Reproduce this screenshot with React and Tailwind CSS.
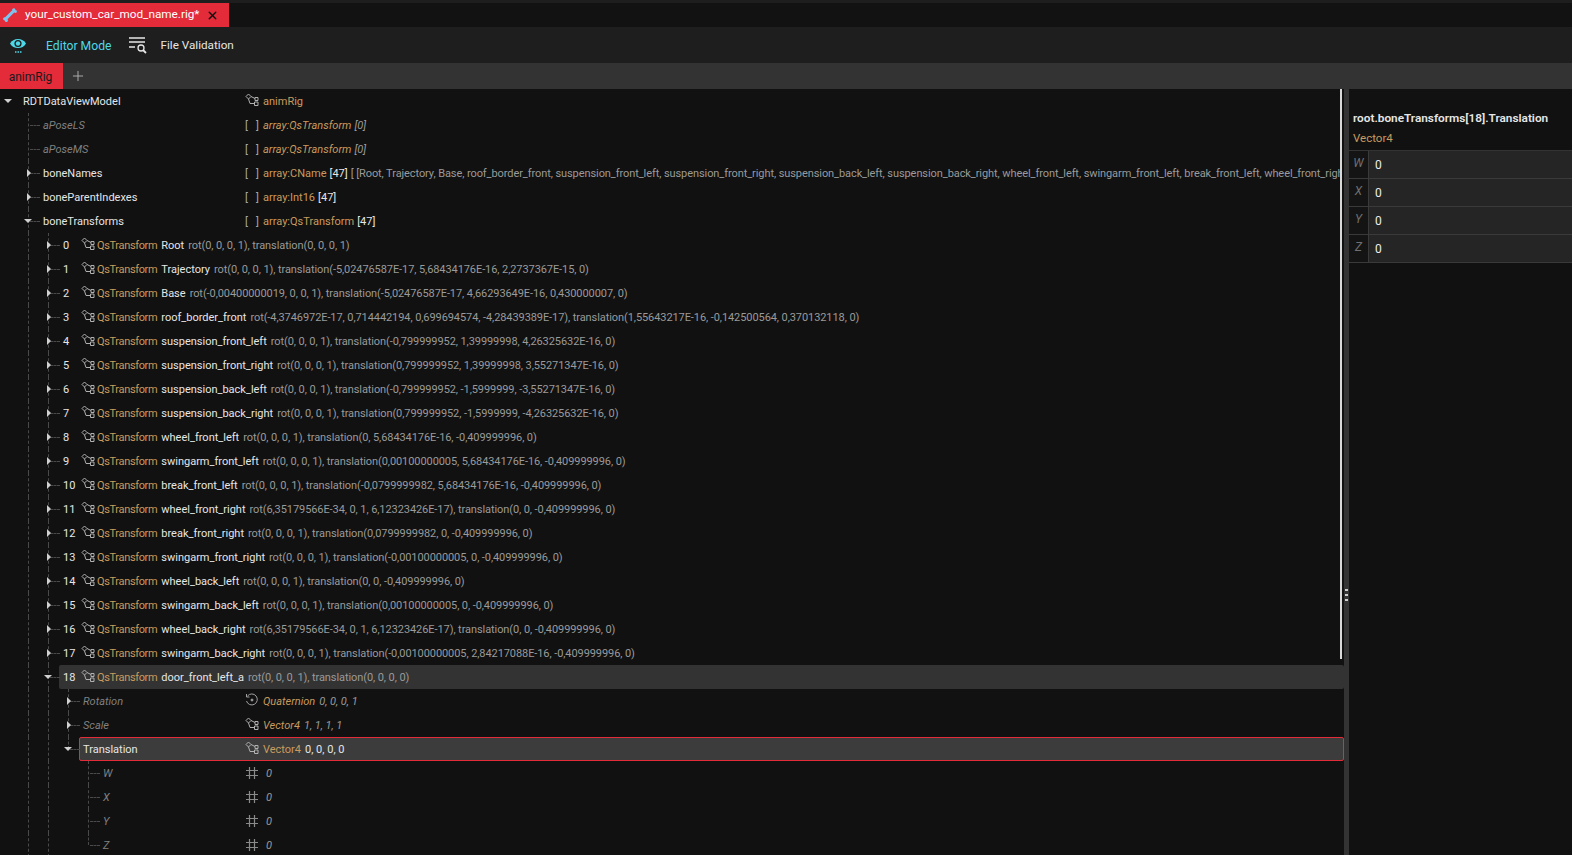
import { Plus, X } from "lucide-react";

const BONES = [
  ["Root", "rot(0, 0, 0, 1), translation(0, 0, 0, 1)"],
  ["Trajectory", "rot(0, 0, 0, 1), translation(-5,02476587E-17, 5,68434176E-16, 2,2737367E-15, 0)"],
  ["Base", "rot(-0,00400000019, 0, 0, 1), translation(-5,02476587E-17, 4,66293649E-16, 0,430000007, 0)"],
  ["roof_border_front", "rot(-4,3746972E-17, 0,714442194, 0,699694574, -4,28439389E-17), translation(1,55643217E-16, -0,142500564, 0,370132118, 0)"],
  ["suspension_front_left", "rot(0, 0, 0, 1), translation(-0,799999952, 1,39999998, 4,26325632E-16, 0)"],
  ["suspension_front_right", "rot(0, 0, 0, 1), translation(0,799999952, 1,39999998, 3,55271347E-16, 0)"],
  ["suspension_back_left", "rot(0, 0, 0, 1), translation(-0,799999952, -1,5999999, -3,55271347E-16, 0)"],
  ["suspension_back_right", "rot(0, 0, 0, 1), translation(0,799999952, -1,5999999, -4,26325632E-16, 0)"],
  ["wheel_front_left", "rot(0, 0, 0, 1), translation(0, 5,68434176E-16, -0,409999996, 0)"],
  ["swingarm_front_left", "rot(0, 0, 0, 1), translation(0,00100000005, 5,68434176E-16, -0,409999996, 0)"],
  ["break_front_left", "rot(0, 0, 0, 1), translation(-0,0799999982, 5,68434176E-16, -0,409999996, 0)"],
  ["wheel_front_right", "rot(6,35179566E-34, 0, 1, 6,12323426E-17), translation(0, 0, -0,409999996, 0)"],
  ["break_front_right", "rot(0, 0, 0, 1), translation(0,0799999982, 0, -0,409999996, 0)"],
  ["swingarm_front_right", "rot(0, 0, 0, 1), translation(-0,00100000005, 0, -0,409999996, 0)"],
  ["wheel_back_left", "rot(0, 0, 0, 1), translation(0, 0, -0,409999996, 0)"],
  ["swingarm_back_left", "rot(0, 0, 0, 1), translation(0,00100000005, 0, -0,409999996, 0)"],
  ["wheel_back_right", "rot(6,35179566E-34, 0, 1, 6,12323426E-17), translation(0, 0, -0,409999996, 0)"],
  ["swingarm_back_right", "rot(0, 0, 0, 1), translation(-0,00100000005, 2,84217088E-16, -0,409999996, 0)"],
];

const BONE_NAMES =
  "[ [Root, Trajectory, Base, roof_border_front, suspension_front_left, suspension_front_right, suspension_back_left, suspension_back_right, wheel_front_left, swingarm_front_left, break_front_left, wheel_front_right, break_front_right, swingarm_front_right]";

function NodeIcon() {
  return (
    <svg width="14" height="14" viewBox="0 0 14 14" fill="none" stroke="#b0b0b0" strokeWidth="1" className="relative shrink-0 -translate-y-px">
      <path d="M1 3.500 L3.500 1 L6 3.500 L3.500 6 Z" />
      <path d="M6 3.500 L10 5.500 M3.500 6 L5 10.500 L9.500 10.500" />
      <path d="M10 4.500 h3 v3 h-3 z M9.500 9 h3.500 v3.500 h-3.500 z" />
    </svg>
  );
}

function QuatIcon() {
  return (
    <svg width="14" height="14" viewBox="0 0 14 14" fill="none" stroke="#a0a0a0" strokeWidth="1" className="relative shrink-0 -translate-y-px">
      <path d="M2.500 3 A5.500 5.500 0 1 1 1.500 8" />
      <path d="M1.500 1 V4 H4.500" />
      <circle cx="7" cy="7" r="1" fill="#a0a0a0" />
    </svg>
  );
}

function HashIcon() {
  return (
    <svg width="14" height="14" viewBox="0 0 14 14" fill="none" stroke="#8a8a8a" strokeWidth="1.2" className="relative shrink-0">
      <path d="M4.500 1v12M9.500 1v12M1 4.500h12M1 9.500h12" />
    </svg>
  );
}

function Brackets() {
  return (
    <span className="flex w-[14px] shrink-0 justify-between text-[#a8a8a8]">
      <span>[</span>
      <span>]</span>
    </span>
  );
}

function Caret({ open }) {
  if (open) {
    return <span className="absolute left-[4px] top-[10px] h-0 w-0 border-x-[4px] border-t-[4px] border-x-transparent border-t-[#d0d0d0]" />;
  }
  return <span className="absolute left-[7px] top-[8px] h-0 w-0 border-y-[4px] border-l-[4px] border-y-transparent border-l-[#d0d0d0]" />;
}

// one indent cell per ancestor level, the guide runs through the cell at x=8
function Guide({ blank }) {
  return (
    <div className="relative h-6 w-5 shrink-0">
      {!blank && <span className="absolute left-[8px] top-0 h-6 border-l border-dashed border-[#4a4a4a]" />}
    </div>
  );
}

function Stub({ caret, last, root }) {
  return (
    <div className="relative h-6 w-5 shrink-0">
      {!root && <span className={`absolute left-[8px] top-0 border-l border-dashed border-[#4a4a4a] ${last ? "h-3" : "h-6"}`} />}
      {!root && <span className="absolute left-[10px] top-3 w-[10px] border-t border-dashed border-[#4a4a4a]" />}
      {caret && <Caret open={caret === "open"} />}
    </div>
  );
}

function Row({ indent, caret, last, root, label, dim, children, selected }) {
  return (
    <div className="relative flex h-6 items-center">
      {selected && <div className="absolute inset-y-0 left-[79px] right-0 rounded-[2px] border border-[#e32b3a] bg-[#3c3c3c]" />}
      <div className="relative flex h-6 w-[245px] shrink-0 items-center overflow-hidden">
        {indent}
        <Stub caret={caret} last={last} root={root} />
        <span className={`ml-[3px] translate-y-px whitespace-nowrap ${dim ? "italic text-[#808080]" : "text-[#e6e6e6]"}`}>{label}</span>
      </div>
      <div className="relative mr-1 flex min-w-0 flex-1 items-center gap-[3px] overflow-hidden whitespace-nowrap [&>span]:translate-y-px">{children}</div>
    </div>
  );
}

function BoneRow({ i, name, desc, open }) {
  return (
    <div className="relative flex h-6 items-center [&>span]:translate-y-px">
      {open && <div className="absolute inset-y-0 left-[59px] right-0 rounded-[2px] bg-[#333333]" />}
      <Guide blank />
      <Guide />
      <Stub caret={open ? "open" : "closed"} />
      <span className="relative ml-[3px] w-[18px] shrink-0 text-[#e6e6e6]">{i}</span>
      <NodeIcon />
      <span className="relative ml-[2px] mr-[4px] shrink-0 tracking-[-0.35px] text-[#c89b5f]">QsTransform</span>
      <span className="relative whitespace-nowrap text-[#e6e6e6]">{name}</span>
      <span className="relative ml-[4px] whitespace-nowrap tracking-[-0.08px] text-[#9a9a9a]">{desc}</span>
    </div>
  );
}

const L1 = <Guide blank />;
const L3 = (
  <>
    <Guide blank />
    <Guide />
    <Guide />
  </>
);
const L4 = (
  <>
    <Guide blank />
    <Guide />
    <Guide />
    <Guide blank />
  </>
);

function Tree() {
  return (
    <div className="relative w-[1344px] shrink-0 overflow-hidden">
      <Row root caret="open" label="RDTDataViewModel">
        <NodeIcon /><span className="ml-[1px] text-[#c89b5f]">animRig</span>
      </Row>
      <Row indent={L1} dim label="aPoseLS">
        <Brackets /><span className="ml-[1px] italic text-[#c89b5f]">array:QsTransform</span><span className="italic text-[#9a9a9a]">[0]</span>
      </Row>
      <Row indent={L1} dim label="aPoseMS">
        <Brackets /><span className="ml-[1px] italic text-[#c89b5f]">array:QsTransform</span><span className="italic text-[#9a9a9a]">[0]</span>
      </Row>
      <Row indent={L1} caret="closed" label="boneNames">
        <Brackets /><span className="ml-[1px] text-[#c89b5f]">array:CName</span><span className="text-[#e6e6e6]">[47]</span>
        <span className="tracking-[-0.08px] text-[#9a9a9a]">{BONE_NAMES}</span>
      </Row>
      <Row indent={L1} caret="closed" label="boneParentIndexes">
        <Brackets /><span className="ml-[1px] text-[#c89b5f]">array:Int16</span><span className="text-[#e6e6e6]">[47]</span>
      </Row>
      <Row indent={L1} caret="open" label="boneTransforms">
        <Brackets /><span className="ml-[1px] text-[#c89b5f]">array:QsTransform</span><span className="text-[#e6e6e6]">[47]</span>
      </Row>
      {BONES.map(([name, desc], i) => <BoneRow key={name} i={i} name={name} desc={desc} />)}
      <BoneRow i={18} name="door_front_left_a" desc="rot(0, 0, 0, 1), translation(0, 0, 0, 0)" open />
      <Row indent={L3} caret="closed" dim label="Rotation">
        <QuatIcon /><span className="ml-[1px] italic text-[#c89b5f]">Quaternion</span><span className="ml-[1px] italic text-[#9a9a9a]">0, 0, 0, 1</span>
      </Row>
      <Row indent={L3} caret="closed" dim label="Scale">
        <NodeIcon /><span className="ml-[1px] italic text-[#c89b5f]">Vector4</span><span className="ml-[1px] italic text-[#9a9a9a]">1, 1, 1, 1</span>
      </Row>
      <Row indent={L3} caret="open" last label="Translation" selected>
        <NodeIcon /><span className="ml-[1px] text-[#c89b5f]">Vector4</span><span className="ml-[1px] text-[#e6e6e6]">0, 0, 0, 0</span>
      </Row>
      {["W", "X", "Y", "Z"].map((axis) => (
        <Row key={axis} indent={L4} last={axis === "Z"} dim label={axis}>
          <HashIcon />
          <span className="ml-[4px] italic text-[#9a9a9a]">0</span>
        </Row>
      ))}
      <div className="absolute right-[2px] top-0 h-[570px] w-[2px] bg-[#d8d8d8]" />
    </div>
  );
}

function Inspector() {
  return (
    <div className="min-w-0 flex-1">
      <div className="flex h-[61px] flex-col justify-end gap-[4px] pb-[4px] pl-1 leading-4">
        <div className="text-[11.8px] font-semibold text-[#e6e6e6]">root.boneTransforms[18].Translation</div>
        <div className="text-[11.5px] text-[#c89b5f]">Vector4</div>
      </div>
      <div className="border-t border-[#333333]">
        {["W", "X", "Y", "Z"].map((axis) => (
          <div key={axis} className="flex h-7 border-b border-[#3a3a3a] bg-[#252525]">
            <div className="flex w-[20px] items-center justify-center border-r border-[#3a3a3a] bg-[#141414] pb-[3px] text-[12px] italic text-[#707070]">{axis}</div>
            <div className="flex items-center pl-[6px] text-[12px] text-[#eeeeee]">0</div>
          </div>
        ))}
      </div>
    </div>
  );
}

export default function App() {
  return (
    <div className="flex h-[855px] w-[1572px] flex-col overflow-hidden bg-[#111111] font-['Roboto',sans-serif] text-[11px]">
      <div className="h-[3px] bg-[#1e1e1e]" />
      <div className="flex h-6 bg-[#121212]">
        <div className="flex w-[229px] items-center bg-[#e32b3a] text-[11.75px] text-white">
          <svg width="16" height="16" viewBox="0 0 16 16" className="ml-[2px] shrink-0" fill="#7cc4f0">
            <path d="M10.200 3.200 C10 1.600 11.600 .8 12.700 1.600 C13.300 2 13.500 2.500 13.400 3 C14.600 3 15.400 4.200 14.700 5.300 C14 6.300 12.700 6.100 12.200 5.500 L5.500 12.200 C6.100 12.800 6.200 14.100 5.200 14.800 C4.100 15.400 2.900 14.700 2.900 13.400 C2.400 13.500 1.800 13.300 1.400 12.700 C.7 11.600 1.500 10 3.100 10.200 Z" />
          </svg>
          <span className="ml-[7px]">your_custom_car_mod_name.rig*</span>
          <X size={13} strokeWidth={2.5} className="ml-[7px] shrink-0 text-[#111111]" />
        </div>
      </div>
      <div className="flex h-9 items-center bg-[#1e1e1e] text-[12.2px]">
        <svg width="18" height="18" viewBox="0 0 18 18" className="ml-[9px] shrink-0" fill="none">
          <path d="M1 7.500 C4 1.500 14 1.500 17 7.500 C14 13.500 4 13.500 1 7.500 Z" fill="#4dd8e8" />
          <circle cx="9" cy="7.500" r="3.600" fill="#1e1e1e" />
          <circle cx="9" cy="7.500" r="2.200" fill="#4dd8e8" />
          <path d="M6 16h1.500M8.500 16H10M11 16h1.500" stroke="#4dd8e8" strokeWidth="1.400" />
        </svg>
        <span className="ml-[19px] translate-y-px text-[#4dd8e8]">Editor Mode</span>
        <svg width="18" height="18" viewBox="0 0 18 18" className="ml-[17px] shrink-0" fill="none" stroke="#e6e6e6" strokeWidth="1.300">
          <path d="M0 2h16M0 6h16M0 11h6" />
          <circle cx="12" cy="12" r="3" />
          <path d="M14 14l3 3" strokeWidth="1.800" />
        </svg>
        <span className="ml-[14px] translate-y-px text-[11.7px] text-[#e6e6e6]">File Validation</span>
      </div>
      <div className="flex h-[26px] items-stretch bg-[#333333]">
        <div className="flex w-[63px] items-center justify-center bg-[#e32b3a] pt-[2px] pr-[2px] text-[12px] text-[#1a1a1a]">animRig</div>
        <Plus size={16} strokeWidth={1.500} className="ml-[7px] self-center text-[#aaaaaa]" />
      </div>
      <div className="flex min-h-0 flex-1">
        <Tree />
        <div className="relative w-[5px] shrink-0 bg-[#333333]">
          <div className="absolute left-[1px] top-[500px] flex flex-col gap-[3px]">
            <span className="h-[2px] w-[3px] bg-[#cccccc]" />
            <span className="h-[2px] w-[3px] bg-[#cccccc]" />
            <span className="h-[2px] w-[3px] bg-[#cccccc]" />
          </div>
        </div>
        <Inspector />
      </div>
    </div>
  );
}
